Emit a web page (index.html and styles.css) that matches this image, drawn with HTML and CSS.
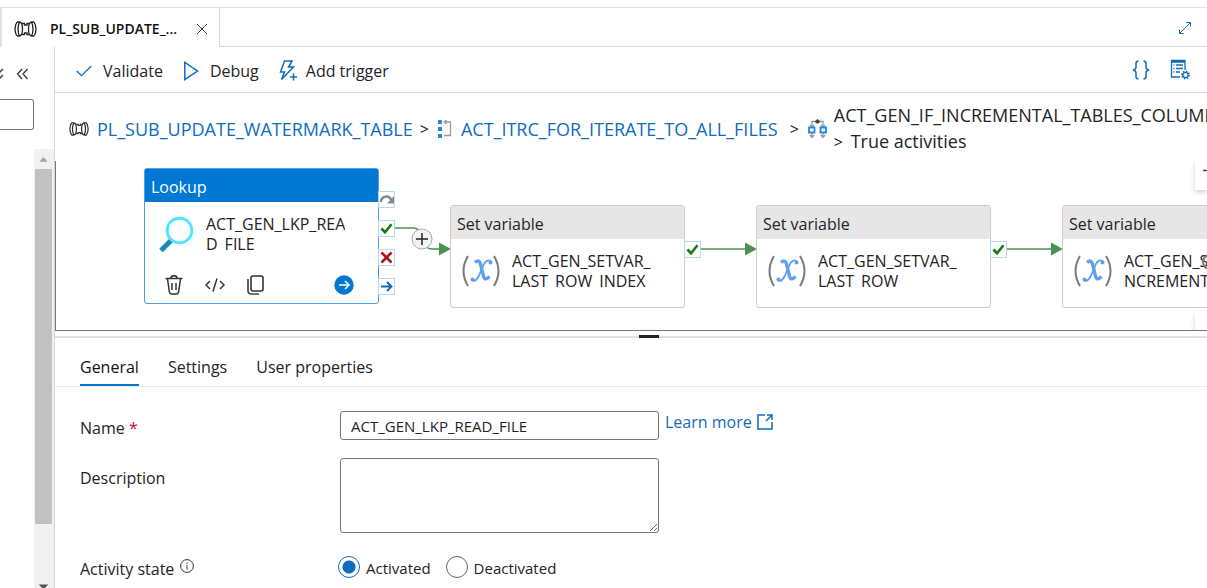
FILE: index.html
```html
<!DOCTYPE html>
<html lang="en">
<head>
<meta charset="utf-8">
<title>Pipeline editor</title>
<link rel="stylesheet" href="styles.css">
</head>
<body>
<svg class="defs" aria-hidden="true">
  <symbol id="pipe" viewBox="0 0 23 16">
    <g fill="none" stroke="currentColor" stroke-width="1.3">
      <path d="M3 1Q1 4 1 8T3 15M3 1H5.500M3 15H5.500M5.500 1Q4 4 4 8T5.500 15M5.500 1Q8.500 1.500 8.500 8T5.500 15"/>
      <path d="M8 2.500H10.500V4H13V2.500H15M8 13.500H10.500V12H13V13.500H15"/>
      <path d="M20 1Q22 4 22 8T20 15M20 1H17.500M20 15H17.500M17.500 1Q19 4 19 8T17.500 15M17.500 1Q14.500 1.500 14.500 8T17.500 15"/>
    </g>
  </symbol>
  <symbol id="check" viewBox="0 0 15 15">
    <path d="M2.500 7.500L6 11.300L12.500 3.300" fill="none" stroke="#107c10" stroke-width="2.600"/>
  </symbol>
  <symbol id="variable" viewBox="0 0 38 32">
    <path d="M6 1Q-3 16 6 31M32 1Q41 16 32 31" fill="none" stroke="#7a7a7a" stroke-width="2"/>
    <path d="M13 7.500Q17 4 18.500 9L21.500 21Q22.500 26.500 27.500 21.500" fill="none" stroke="#5ea0ef" stroke-width="3.400"/>
    <path d="M29 6.500Q25 3.500 22 9L17 20.500Q13.500 28 9.500 25" fill="none" stroke="#5ea0ef" stroke-width="1.800"/>
    <circle cx="28.500" cy="7.500" r="2" fill="#5ea0ef"/><circle cx="10.500" cy="24.500" r="2" fill="#5ea0ef"/>
  </symbol>
</svg>
<header class="tabbar">
  <div class="file-tab">
    <svg class="pipe-icon" aria-hidden="true"><use href="#pipe"/></svg>
    <span class="file-name">PL_SUB_UPDATE_...</span>
    <button class="icon-button" aria-label="Close tab"><svg width="12" height="12" viewBox="0 0 12 12"><path d="M1 1L11 11M11 1L1 11" stroke="#444" fill="none"/></svg></button>
  </div>
  <button class="icon-button expand" aria-label="Expand"><svg width="14" height="14" viewBox="0 0 14 14"><path d="M1.500 12.500L12.500 1.500M8.500 1.500H12.500V5.500M1.500 8.500V12.500H5.500" stroke="#0f6cbd" fill="none"/></svg></button>
</header>
<div class="workspace">
  <aside class="sidebar">
    <div class="sidebar-head">
      <svg width="30" height="14" viewBox="0 0 30 14" aria-hidden="true"><path d="M-3 2L0 5L3 2M-3 8L0 11L3 8M22 2L17.500 7L22 12M27.500 2L23 7L27.500 12" fill="none" stroke="#333" stroke-width="1.300"/></svg>
    </div>
    <input class="filter" type="text" aria-label="Filter">
    <div class="scroll">
      <svg class="arrow" viewBox="0 0 18 20" aria-hidden="true"><path d="M4.500 13L9 8L13.500 13Z" fill="#a3a3a3"/></svg>
      <div class="thumb"></div>
      <svg class="arrow last" viewBox="0 0 18 20" aria-hidden="true"><path d="M4 17L8 21H10L14 17Z" fill="#505050"/></svg>
    </div>
  </aside>
  <main class="editor">
    <div class="toolbar">
      <button class="tool"><svg width="16" height="12" viewBox="0 0 16 12"><path d="M.7 6L5.500 10.700L15.300 1" fill="none" stroke="#0f6cbd" stroke-width="1.300"/></svg>Validate</button>
      <button class="tool"><svg width="16" height="20" viewBox="0 0 16 20"><path d="M1.800 1.500V18.500L14.500 10Z" fill="none" stroke="#0f6cbd" stroke-width="1.500"/></svg>Debug</button>
      <button class="tool trigger"><svg width="18" height="21" viewBox="0 0 18 21"><path d="M5.500 1H13L9.500 7H14.500L2.500 19.500L5.500 12H1.500Z" fill="none" stroke="#0f6cbd" stroke-width="1.500"/><path d="M14.500 13.500V20.500M11 17H18" stroke="#0f6cbd" stroke-width="1.500"/></svg>Add trigger</button>
      <span class="spacer"></span>
      <button class="icon-button" aria-label="Code"><svg width="18" height="20" viewBox="0 0 18 20"><path d="M6.500 1Q4 1 4 3.500V7Q4 9.500 1 10Q4 10.500 4 13V16.500Q4 19 6.500 19M11.500 1Q14 1 14 3.500V7Q14 9.500 17 10Q14 10.500 14 13V16.500Q14 19 11.500 19" stroke="#0f6cbd" fill="none" stroke-width="1.500"/></svg></button>
      <button class="icon-button" aria-label="Properties"><svg width="20" height="21" viewBox="0 0 20 21"><path d="M10 18H1.500V1.500H15V11M1.500 3H15" stroke="#0f6cbd" fill="none" stroke-width="1.300"/><path d="M3.500 6H4.500M6 6H13M3.500 9.500H4.500M6 9.500H13M3.500 13H4.500M6 13H10" stroke="#0f6cbd" stroke-width="1.300"/><circle cx="15.500" cy="16" r="3.700" fill="none" stroke="#0f6cbd" stroke-width="1.500" stroke-dasharray="1.450 1.450"/><circle cx="15.500" cy="16" r="2.600" fill="none" stroke="#0f6cbd" stroke-width="1.300"/></svg></button>
    </div>
    <nav class="crumbs" aria-label="Breadcrumb">
      <svg class="pipe-small" aria-hidden="true"><use href="#pipe"/></svg>
      <a href="#">PL_SUB_UPDATE_WATERMARK_TABLE</a>
      <span class="sep">&gt;</span>
      <svg class="loop-icon" viewBox="0 0 14 18" aria-hidden="true"><path d="M0 0H4V4H0ZM0 7H4V11H0ZM0 14H4V18H0Z" fill="#2b88d8"/><path d="M6 2H12.500V15.500H6M8.500 0L6 2L8.500 4" fill="none" stroke="#999" stroke-width="1.300"/></svg>
      <a href="#">ACT_ITRC_FOR_ITERATE_TO_ALL_FILES</a>
      <span class="sep wide">&gt;</span>
      <svg class="branch-icon" viewBox="0 0 19 20" aria-hidden="true"><path d="M4 19V2.500H15V19M1.800 16L4 18.500L6.200 16M12.800 16L15 18.500L17.200 16M2 6L4 8L6 6M13 6L15 8L17 6" fill="none" stroke="#999" stroke-width="1.300"/><path d="M9.500 0L12.500 2.500L9.500 5L6.500 2.500Z" fill="#444"/><path d="M1 8.500H6.500V13.500H1ZM12.500 8.500H18V13.500H12.500Z" fill="#fff" stroke="#1e88e5" stroke-width="1.800"/></svg>
      <span class="current">ACT_GEN_IF_INCREMENTAL_TABLES_COLUMN<br><span class="sep">&gt;</span> True activities</span>
    </nav>
    <section class="canvas" aria-label="Pipeline canvas">
      <svg class="edges" aria-hidden="true">
        <g fill="none" stroke="#4a9153" stroke-width="1.500">
          <path d="M339 67H358Q365 68 367 77Q368 88 376 88H386"/><path d="M645 88H692M951 88H998"/>
        </g>
        <path d="M383 81.500L395 88L383 94.500ZM689 81.500L701 88L689 94.500ZM995 81.500L1007 88L995 94.500Z" fill="#4a9153"/>
        <circle cx="366" cy="78" r="10" fill="#f3f3f3" stroke="#aaa"/><path d="M366 72V84M360 78H372" stroke="#222" stroke-width="1.500"/>
      </svg>
      <article class="node lookup">
        <h2>Lookup</h2>
        <div class="node-body">
          <svg class="node-icon" viewBox="0 0 38 38" aria-hidden="true"><path d="M4 35.500L16 23.500" stroke="#198ab3" stroke-width="5"/><circle cx="22.500" cy="15.500" r="12.300" fill="#fff" stroke="#50e6ff" stroke-width="3"/></svg>
          <p>ACT_GEN_LKP_REA<br>D_FILE</p>
        </div>
        <div class="actions">
          <button class="icon-button" aria-label="Delete"><svg width="18" height="20" viewBox="0 0 18 20"><path d="M.5 3.500H17.500M6 3Q6 .7 9 .7T12 3M2.500 4L4.500 17.500Q5 19 6.500 19H11.500Q13 19 13.500 17.500L15.500 4M7 8V15M11 8V15" fill="none" stroke="#333" stroke-width="1.500"/></svg></button>
          <button class="icon-button" aria-label="Code"><svg width="20" height="14" viewBox="0 0 20 14"><path d="M5 3L1 7L5 11M15 3L19 7L15 11M12 .5L8 13.500" fill="none" stroke="#333" stroke-width="1.500"/></svg></button>
          <button class="icon-button" aria-label="Clone"><svg width="17" height="20" viewBox="0 0 17 20"><path d="M1 4V15.500Q1 19 4.500 19H12" fill="none" stroke="#444" stroke-width="1.700"/><rect x="4" y="1" width="12" height="15" rx="2" fill="none" stroke="#333" stroke-width="1.600"/></svg></button>
          <button class="icon-button run" aria-label="Open"><svg width="20" height="20" viewBox="0 0 20 20"><circle cx="10" cy="10" r="9.700" fill="#0078d4"/><path d="M5 10H15M11 6L15 10L11 14" fill="none" stroke="#fff" stroke-width="1.600"/></svg></button>
        </div>
        <div class="ports">
          <svg class="port" viewBox="0 0 15 15"><path d="M1.500 10Q3 4.500 7.500 4.500Q11 4.500 13 9" fill="none" stroke="#8a8a8a" stroke-width="2.400"/><path d="M15 4V11.500H8Z" fill="#8a8a8a"/></svg>
          <svg class="port"><use href="#check"/></svg>
          <svg class="port" viewBox="0 0 15 15"><path d="M2.500 2.500L12.500 12.500M12.500 2.500L2.500 12.500" stroke="#b10e1c" stroke-width="2.600"/></svg>
          <svg class="port" viewBox="0 0 15 15"><path d="M2 7.500H12.500M8 3L12.500 7.500L8 12" fill="none" stroke="#0f6cbd" stroke-width="1.900"/></svg>
        </div>
      </article>
      <article class="node second">
        <h2>Set variable</h2>
        <div class="node-body"><svg class="node-icon" aria-hidden="true"><use href="#variable"/></svg><p>ACT_GEN_SETVAR_<br>LAST_ROW_INDEX</p></div>
        <div class="ports"><svg class="port"><use href="#check"/></svg></div>
      </article>
      <article class="node third">
        <h2>Set variable</h2>
        <div class="node-body"><svg class="node-icon" aria-hidden="true"><use href="#variable"/></svg><p>ACT_GEN_SETVAR_<br>LAST_ROW</p></div>
        <div class="ports"><svg class="port"><use href="#check"/></svg></div>
      </article>
      <article class="node fourth">
        <h2>Set variable</h2>
        <div class="node-body"><svg class="node-icon" aria-hidden="true"><use href="#variable"/></svg><p>ACT_GEN_SETVAR_<br>NCREMENTAL</p></div>
      </article>
      <span class="handle"></span>
      <button class="zoom top" aria-label="Zoom in"><svg width="12" height="16" viewBox="0 0 12 16"><path d="M8 7.500H12" stroke="#444" stroke-width="1.500"/></svg></button>
      <span class="zoom bottom"></span>
    </section>
    <div class="splitter"><span></span></div>
    <div class="tabs" role="tablist">
      <button class="tab active" role="tab" aria-selected="true">General</button>
      <button class="tab" role="tab">Settings</button>
      <button class="tab" role="tab">User properties</button>
    </div>
    <form class="form">
      <div class="row">
        <label for="name">Name <span class="required">*</span></label>
        <input id="name" class="field" type="text" value="ACT_GEN_LKP_READ_FILE">
        <a class="learn" href="#">Learn more<svg width="16" height="16" viewBox="0 0 16 16"><path d="M8 1H1V15H15V8M10 1H15V6M15 1L9 7" fill="none" stroke="#0f6cbd" stroke-width="1.500"/></svg></a>
      </div>
      <div class="row description">
        <label for="desc">Description</label>
        <textarea id="desc" class="field"></textarea>
      </div>
      <div class="row state">
        <span class="label">Activity state <svg width="14" height="14" viewBox="0 0 14 14"><circle cx="7" cy="7" r="6.400" fill="none" stroke="#333"/><path d="M7 6V10.500M7 3.500V5" stroke="#333"/></svg></span>
        <div class="options">
          <label><input type="radio" name="state" checked><span>Activated</span></label>
          <label><input type="radio" name="state"><span>Deactivated</span></label>
        </div>
      </div>
    </form>
  </main>
</div>
</body>
</html>
```

FILE: styles.css
```css
* { box-sizing: border-box; }
body {
  display: flex;
  flex-direction: column;
  height: 100vh;
  margin: 0;
  padding-top: 7px;
  overflow: hidden;
  background: #fff;
  color: #242424;
  font: 16px/20px "Open Sans", "Noto Sans", sans-serif;
}
button, input, textarea { font: inherit; color: inherit; }
svg { display: block; flex: none; }
a { color: #0f6cbd; text-decoration: none; }
.defs { position: absolute; width: 0; height: 0; }
.icon-button { display: flex; padding: 0; border: 0; background: none; }
.spacer { flex: 1; }

.tabbar {
  display: flex;
  flex: none;
  height: 40px;
  border-top: 1px solid #e1e1e1;
}
.file-tab {
  display: flex;
  align-items: center;
  width: 220px;
  padding: 2px 11px 0 12px;
  border-left: 2px solid #e1e1e1;
  border-right: 1px solid #d6d6d6;
}
.pipe-icon { width: 23px; height: 16px; color: #222; }
.file-name {
  flex: 1;
  padding-left: 13px;
  color: #111;
  font-size: 14px;
  font-weight: 600;
  white-space: nowrap;
}
.expand {
  flex: 1;
  align-items: center;
  justify-content: flex-end;
  padding: 2px 15px 0 0;
  border-bottom: 1px solid #d6d6d6;
}

.workspace { display: flex; flex: 1; min-height: 0; }
.sidebar {
  display: flex;
  flex: none;
  flex-direction: column;
  width: 55px;
  border-right: 1px solid #d6d6d6;
}
.sidebar-head { padding: 20px 0 18px; }
.filter {
  width: 34px;
  height: 31px;
  border: 1px solid #767676;
  border-left: 0;
  border-radius: 0 3px 3px 0;
}
.scroll {
  display: flex;
  flex: 1;
  flex-direction: column;
  align-self: flex-end;
  width: 20px;
  margin-top: 19px;
  padding: 0 2px 0 1px;
  background: #f1f1f1;
}
.arrow { width: 17px; height: 20px; }
.thumb { flex: 0 0 85%; max-height: 355px; background: #c1c1c1; }
.last { margin-top: auto; }

.editor { display: flex; flex: 1; flex-direction: column; min-width: 0; }
.toolbar {
  display: flex;
  flex: none;
  align-items: center;
  gap: 20px;
  height: 46px;
  padding: 0 17px 0 21px;
  border-bottom: 1px solid #d6d6d6;
}
.tool {
  display: flex;
  align-items: center;
  gap: 11px;
  padding: 2px 0 0;
  border: 0;
  background: none;
}
.trigger { gap: 9px; }
.crumbs {
  display: flex;
  flex: none;
  align-items: center;
  height: 68px;
  padding: 3px 0 0 14px;
  font-size: 18px;
  line-height: 26px;
  white-space: nowrap;
  overflow: hidden;
}
.pipe-small { width: 20px; height: 14px; margin-right: 8px; }
.loop-icon { width: 14px; height: 18px; margin-right: 9px; }
.branch-icon { width: 19px; height: 20px; margin-right: 7px; }
.sep { margin: 0 9px 0 7px; font-size: 16px; }
.wide { margin-left: 12px; }
.current .sep { margin: 0 3px 0 0; }

.canvas {
  position: relative;
  flex: none;
  height: 170px;
  border-left: 1px solid #777;
  border-bottom: 1px solid #777;
  overflow: hidden;
}
.edges { position: absolute; inset: 0; width: 100%; height: 100%; }
.node {
  position: absolute;
  top: 44px;
  width: 235px;
  height: 103px;
  border: 1px solid #ccc;
  border-radius: 3px;
  background: #fff;
}
.node h2 {
  margin: 0;
  padding: 8px 6px 5px;
  background: #e6e6e6;
  font-size: 16px;
  font-weight: 400;
  line-height: 20px;
}
.lookup { left: 88px; top: 7px; height: 136px; border-color: #4aa0e6; }
.lookup h2 { background: #0078d4; color: #fff; }
.second { left: 394px; }
.third { left: 700px; }
.fourth { left: 1006px; }
.node-body { display: flex; gap: 12px; padding: 12px 0 0 11px; }
.node-icon { width: 38px; height: 38px; margin-top: 1px; }
.node-body p { height: 37px; margin: 0; overflow: hidden; white-space: nowrap; }
.lookup .node-body { gap: 11px; padding-left: 12px; }
.actions { display: flex; align-items: center; gap: 22px; padding: 22px 24px 0 20px; }
.run { margin-left: auto; }
.ports {
  position: absolute;
  top: 35px;
  left: 233px;
  display: grid;
  gap: 12px;
}
.lookup .ports { top: 22px; }
.port {
  width: 17px;
  height: 17px;
  border: 1px solid #b5d8f7;
  background: #fff;
}
.handle {
  position: absolute;
  left: 1146px;
  top: 93px;
  width: 16px;
  height: 16px;
  border: 2px solid #777;
  border-radius: 50%;
}
.zoom {
  position: absolute;
  right: 0;
  width: 12px;
  padding: 0;
  border: 0;
  background: #fff;
  box-shadow: 0 2px 5px #ccc;
}
.zoom.top { top: 0; height: 29px; padding-bottom: 10px; }
.zoom.bottom { top: 151px; height: 20px; }

.splitter {
  flex: none;
  height: 8px;
  padding-top: 5px;
}
.splitter::before {
  content: "";
  display: block;
  height: 2px;
  background: #e1e1e1;
}
.splitter span {
  display: block;
  width: 20px;
  height: 3px;
  margin: -3px auto 0;
  background: #222;
}
.splitter { padding-right: 0; }
.splitter::before { margin-bottom: 0; }
.splitter span { margin-left: 584px; }
.tabs {
  display: flex;
  flex: none;
  gap: 29px;
  height: 48px;
  padding-left: 25px;
  border-bottom: 1px solid #e8e8e8;
}
.tab {
  padding: 12px 0 2px;
  border: 0;
  border-bottom: 2px solid transparent;
  background: none;
}
.active { border-color: #0078d4; color: #111; }

.form { display: grid; gap: 18px; padding: 24px 25px 0; }
.row { display: grid; grid-template-columns: 260px 319px 1fr; align-items: start; }
.row > label, .label { padding-top: 7px; }
.required { color: #c50f1f; }
.field {
  width: 100%;
  height: 29px;
  padding: 1px 10px 0;
  border: 1px solid #767676;
  border-radius: 3px;
  background: #fff;
  font-size: 15px;
}
textarea.field { height: 75px; resize: vertical; }
.description > label { padding-top: 10px; }
.learn { display: flex; align-items: center; gap: 5px; padding: 1px 0 0 6px; }
.label { display: flex; gap: 6px; padding-top: 8px; }
.options { display: flex; gap: 17px; padding-top: 5px; font-size: 15px; }
.options label { display: flex; align-items: center; gap: 6px; }
.options span { padding-top: 2px; }
.options input {
  appearance: none;
  width: 22px;
  height: 22px;
  margin: 0 0 0 -2px;
  border: 1px solid #666;
  border-radius: 50%;
}
.options input:checked {
  border-color: #0f6cbd;
  background: radial-gradient(circle, #0f6cbd 0 6px, #fff 7px);
}
```
